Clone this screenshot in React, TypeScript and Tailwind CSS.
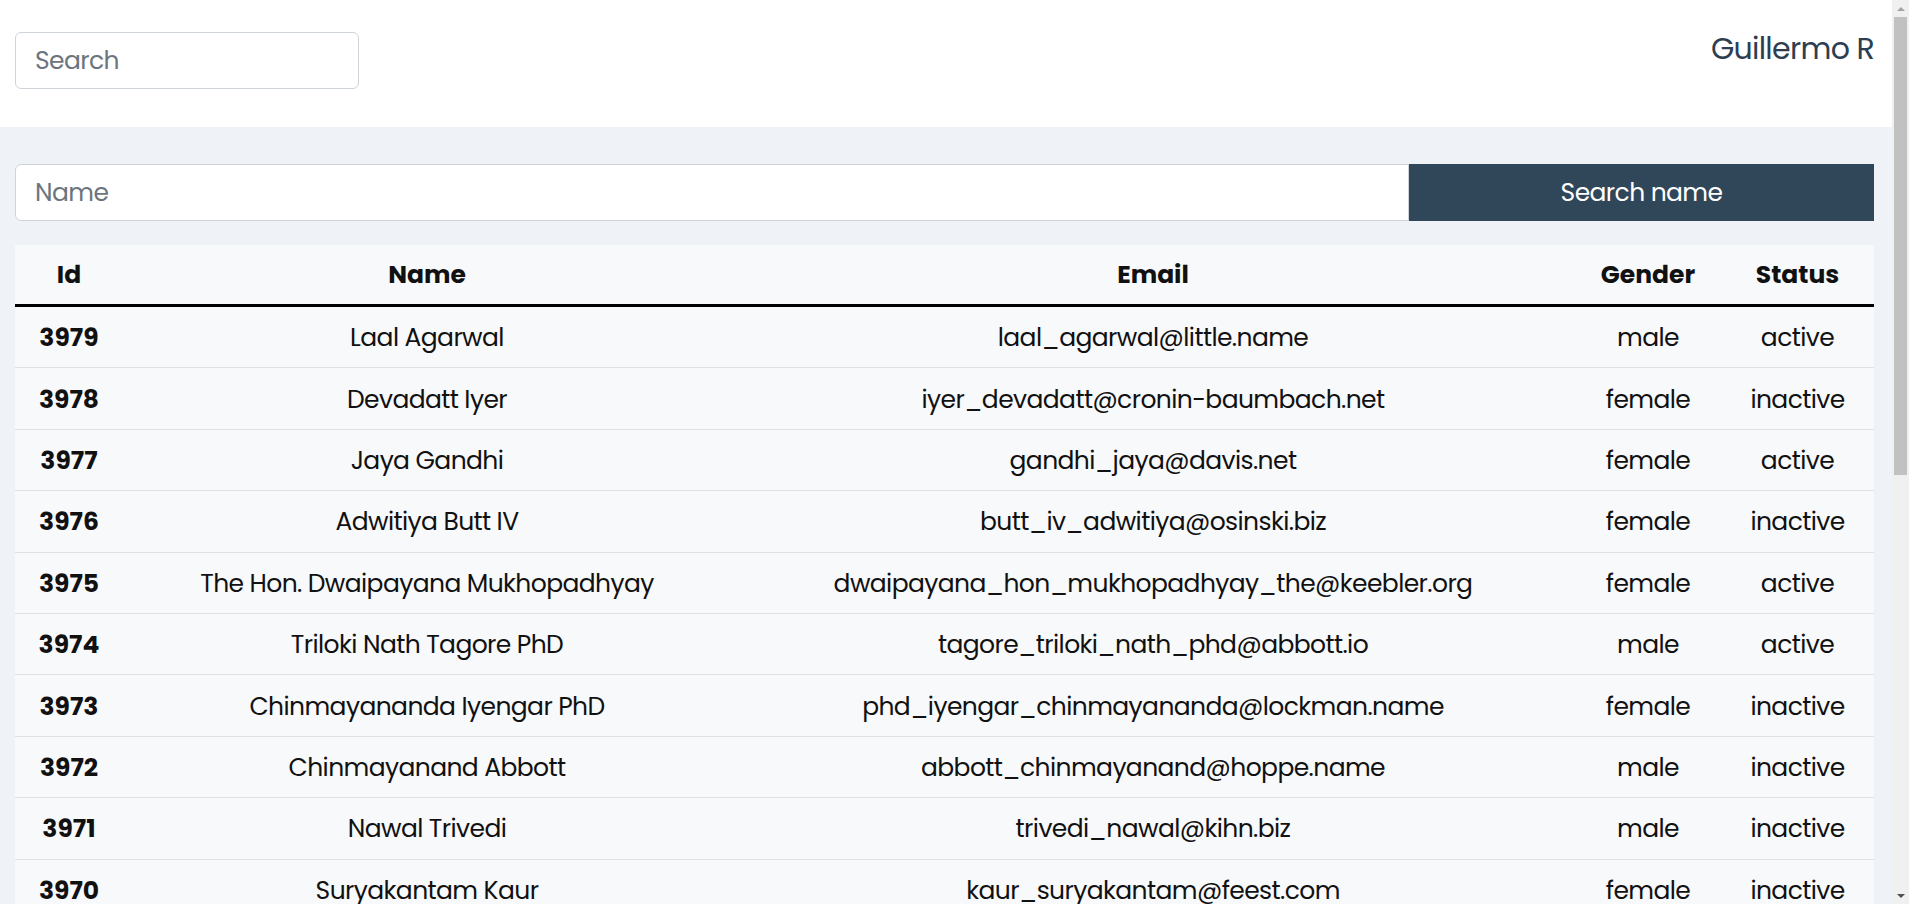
import { useState } from 'react';

type User = {
  id: number;
  name: string;
  email: string;
  gender: string;
  status: string;
};

const users: User[] = [
  { id: 3979, name: 'Laal Agarwal', email: 'laal_agarwal@little.name', gender: 'male', status: 'active' },
  { id: 3978, name: 'Devadatt Iyer', email: 'iyer_devadatt@cronin-baumbach.net', gender: 'female', status: 'inactive' },
  { id: 3977, name: 'Jaya Gandhi', email: 'gandhi_jaya@davis.net', gender: 'female', status: 'active' },
  { id: 3976, name: 'Adwitiya Butt IV', email: 'butt_iv_adwitiya@osinski.biz', gender: 'female', status: 'inactive' },
  { id: 3975, name: 'The Hon. Dwaipayana Mukhopadhyay', email: 'dwaipayana_hon_mukhopadhyay_the@keebler.org', gender: 'female', status: 'active' },
  { id: 3974, name: 'Triloki Nath Tagore PhD', email: 'tagore_triloki_nath_phd@abbott.io', gender: 'male', status: 'active' },
  { id: 3973, name: 'Chinmayananda Iyengar PhD', email: 'phd_iyengar_chinmayananda@lockman.name', gender: 'female', status: 'inactive' },
  { id: 3972, name: 'Chinmayanand Abbott', email: 'abbott_chinmayanand@hoppe.name', gender: 'male', status: 'inactive' },
  { id: 3971, name: 'Nawal Trivedi', email: 'trivedi_nawal@kihn.biz', gender: 'male', status: 'inactive' },
  { id: 3970, name: 'Suryakantam Kaur', email: 'kaur_suryakantam@feest.com', gender: 'female', status: 'inactive' },
  { id: 3969, name: 'Gopal Menon', email: 'menon_gopal@ritchie.info', gender: 'male', status: 'active' },
];

function UserTable({ rows }: { rows: User[] }) {
  return (
    <table className="w-full table-fixed border-collapse bg-[#f8f9fb] text-center text-[25px] leading-[37.5px] text-[#111]">
      <thead>
        <tr className="border-b-[3px] border-black">
          <th className="w-[108px] py-[10.75px] font-bold">Id</th>
          <th className="w-[608px] py-[10.75px] font-bold">Name</th>
          <th className="py-[10.75px] font-bold">Email</th>
          <th className="w-[146px] py-[10.75px] font-bold">Gender</th>
          <th className="w-[153px] py-[10.75px] font-bold">Status</th>
        </tr>
      </thead>
      <tbody>
        {rows.map((u) => (
          <tr key={u.id} className="border-b border-[#dee2e6]">
            <td className="pt-[12.3px] pb-[10.6px] font-bold">{u.id}</td>
            <td className="pt-[12.3px] pb-[10.6px] tracking-[-0.6px]">{u.name}</td>
            <td className="pt-[12.3px] pb-[10.6px] tracking-[-0.6px]">{u.email}</td>
            <td className="pt-[12.3px] pb-[10.6px] tracking-[-0.6px]">{u.gender}</td>
            <td className="pt-[12.3px] pb-[10.6px] tracking-[-0.6px]">{u.status}</td>
          </tr>
        ))}
      </tbody>
    </table>
  );
}

function Scrollbar() {
  return (
    <div className="flex w-[17px] shrink-0 flex-col bg-[#f0f0f0]">
      <div className="flex h-[17px] items-center justify-center">
        <div className="h-0 w-0 border-x-[4px] border-b-[4px] border-x-transparent border-b-[#a3a3a3]" />
      </div>
      <div className="mx-[2px] h-[458px] bg-[#c1c1c1]" />
      <div className="flex-1" />
      <div className="flex h-[17px] items-center justify-center">
        <div className="h-0 w-0 border-x-[4px] border-t-[4px] border-x-transparent border-t-[#505050]" />
      </div>
    </div>
  );
}

export default function App() {
  const [query, setQuery] = useState('');
  const [name, setName] = useState('');

  return (
    <div
      className="flex h-screen overflow-hidden text-[25px]"
      style={{ fontFamily: 'Poppins, Inter, "Noto Sans", sans-serif' }}
    >
      <div className="flex min-w-0 flex-1 flex-col overflow-hidden bg-[#eff2f6]">
        <header className="flex h-[127px] shrink-0 items-start justify-between bg-white pl-[15px] pr-[18px]">
          <div className="pt-[32px]">
            <input
              value={query}
              onChange={(e) => setQuery(e.target.value)}
              placeholder="Search"
              className="h-[57px] w-[344px] rounded-[6px] border border-[#ced4da] bg-white px-[19px] text-[25px] tracking-[-0.6px] text-[#212529] outline-none placeholder:text-[#6c757d]"
            />
          </div>
          <div className="pt-[26px] text-[30px] leading-[45px] tracking-[-0.7px] text-[#2c3e50]">Guillermo R</div>
        </header>

        <main className="pl-[15px] pr-[18px] pt-[37px]">
          <div className="flex h-[57px]">
            <input
              value={name}
              onChange={(e) => setName(e.target.value)}
              placeholder="Name"
              className="min-w-0 flex-1 rounded-l-[6px] border border-[#ced4da] bg-white px-[19px] text-[25px] tracking-[-0.6px] text-[#212529] outline-none placeholder:text-[#6c757d]"
            />
            <button className="w-[465px] bg-[#304659] text-[25px] tracking-[-0.6px] text-white">Search name</button>
          </div>

          <div className="mt-[24px]">
            <UserTable rows={users} />
          </div>
        </main>
      </div>
      <Scrollbar />
    </div>
  );
}
